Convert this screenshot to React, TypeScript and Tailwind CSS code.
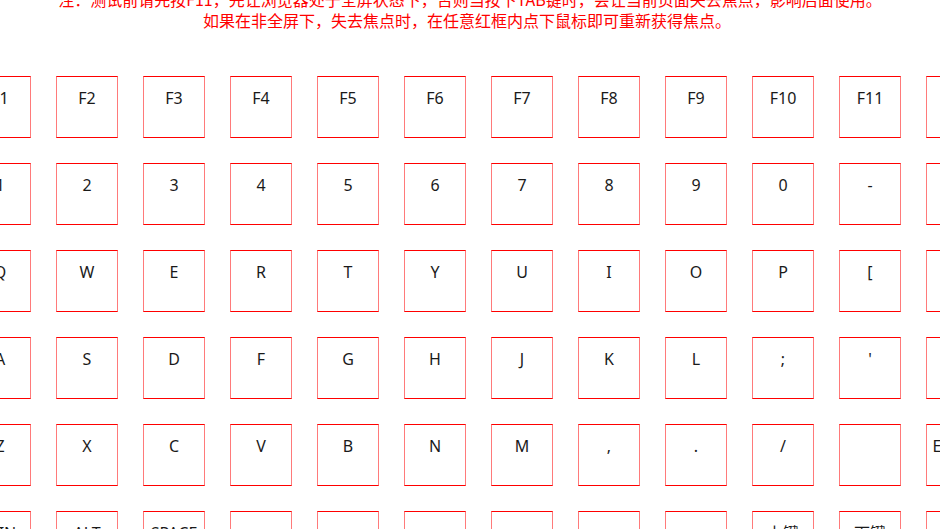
const rows: string[][] = [
  ["F1", "F2", "F3", "F4", "F5", "F6", "F7", "F8", "F9", "F10", "F11", "F12"],
  ["1", "2", "3", "4", "5", "6", "7", "8", "9", "0", "-", "="],
  ["Q", "W", "E", "R", "T", "Y", "U", "I", "O", "P", "[", "]"],
  ["A", "S", "D", "F", "G", "H", "J", "K", "L", ";", "'", ""],
  ["Z", "X", "C", "V", "B", "N", "M", ",", ".", "/", "", "ENTER"],
  ["WIN", "ALT", "SPACE", "", "", "", "", "", "", "上键", "下键", ""],
];

function Key({ label }: { label: string }) {
  return (
    <div className="w-[62px] h-[62px] shrink-0 border border-y-[#ff0000] border-x-[#ff7a7a] pt-[10px] text-center text-[16px] leading-[22px] text-[#1a1a1a] whitespace-nowrap flex justify-center">
      {label}
    </div>
  );
}

export default function App() {
  return (
    <div
      className="w-[940px] h-[529px] overflow-hidden bg-white"
      style={{ fontFamily: '"Noto Sans", "Noto Sans CJK SC", sans-serif' }}
    >
      <div
        className="-mt-[11px] text-center text-[16px] leading-[21px] text-[#ff0000] whitespace-nowrap"
        style={{ fontFamily: '"Noto Sans CJK SC", sans-serif' }}
      >
        <p>注：测试前请先按F11，先让浏览器处于全屏状态下，否则当按下TAB键时，会让当前页面失去焦点，影响后面使用。</p>
        <p className="-ml-[6px]">如果在非全屏下，失去焦点时，在任意红框内点下鼠标即可重新获得焦点。</p>
      </div>
      <div className="mt-[45px] -ml-[31px] flex flex-col gap-[25px]">
        {rows.map((row, i) => (
          <div key={i} className="flex gap-[25px]">
            {row.map((k, j) => (
              <Key key={j} label={k} />
            ))}
          </div>
        ))}
      </div>
    </div>
  );
}
